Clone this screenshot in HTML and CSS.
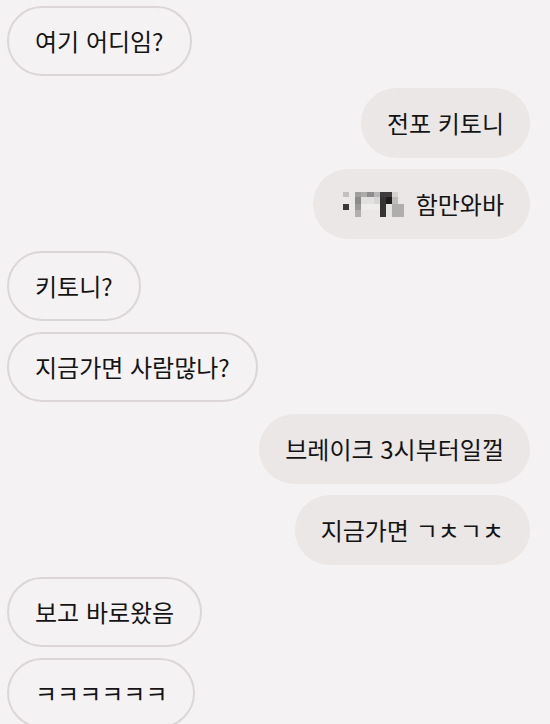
FILE: index.html
```html
<!DOCTYPE html>
<html lang="ko">
<head>
<meta charset="utf-8">
<link rel="stylesheet" href="styles.css">
</head>
<body>
<div class="chat">
  <div class="row in"><div class="bubble">여기 어디임?</div></div>
  <div class="row out"><div class="bubble">전포 키토니</div></div>
  <div class="row out"><div class="bubble"><svg class="mosaic" width="62" height="25" viewBox="0 0 62 25">
    <rect x="1" y="0" width="6" height="5" fill="#c4c0c1"/>
    <rect x="1" y="5" width="6" height="7" fill="#ece9e9"/>
    <rect x="1" y="12" width="6" height="6" fill="#3a3838"/>
    <rect x="13" y="0" width="6" height="5" fill="#a09d9e"/>
    <rect x="13" y="5" width="6" height="7" fill="#8d8a8b"/>
    <rect x="13" y="12" width="6" height="6" fill="#9c999a"/>
    <rect x="13" y="18" width="6" height="7" fill="#b2afb0"/>
    <rect x="19" y="0" width="6" height="5" fill="#aeabac"/>
    <rect x="19" y="5" width="13" height="7" fill="#e3e0e0"/>
    <rect x="25" y="0" width="7" height="5" fill="#8f8c8d"/>
    <rect x="32" y="0" width="6" height="5" fill="#b9b6b7"/>
    <rect x="32" y="5" width="6" height="7" fill="#d8d5d5"/>
    <rect x="19" y="12" width="19" height="6" fill="#efecec"/>
    <rect x="38" y="0" width="12" height="5" fill="#3d3b3b"/>
    <rect x="38" y="5" width="6" height="20" fill="#353333"/>
    <rect x="44" y="5" width="6" height="7" fill="#1e1c1c"/>
    <rect x="44" y="12" width="6" height="13" fill="#e6e3e3"/>
    <rect x="50" y="0" width="6" height="5" fill="#d6d3d3"/>
    <rect x="50" y="5" width="6" height="7" fill="#bdbaba"/>
    <rect x="50" y="12" width="12" height="13" fill="#b0adad"/>
  </svg><span class="txt">함만와바</span></div></div>
  <div class="row in"><div class="bubble">키토니?</div></div>
  <div class="row in"><div class="bubble">지금가면 사람많나?</div></div>
  <div class="row out"><div class="bubble">브레이크 3시부터일껄</div></div>
  <div class="row out"><div class="bubble">지금가면 ㄱㅊㄱㅊ</div></div>
  <div class="row in"><div class="bubble">보고 바로왔음</div></div>
  <div class="row in"><div class="bubble">ㅋㅋㅋㅋㅋㅋ</div></div>
</div>
</body>
</html>
```
FILE: styles.css
```css
html, body {
  margin: 0;
  padding: 0;
  background: #f5f2f3;
}
body {
  width: 550px;
  height: 724px;
  overflow: hidden;
  font-family: "Noto Sans CJK KR", "Noto Sans", sans-serif;
  color: #151414;
}
.chat {
  display: flex;
  flex-direction: column;
  gap: 11.5px;
  padding: 6px 20px 0 7px;
}
.row {
  display: flex;
}
.row.in { justify-content: flex-start; }
.row.out { justify-content: flex-end; }
.bubble {
  box-sizing: border-box;
  height: 70px;
  border-radius: 35px;
  padding: 0 26px;
  display: flex;
  align-items: center;
  font-size: 24px;
  line-height: 1;
  white-space: nowrap;
}
.in .bubble {
  border: 2px solid #dcd6d7;
  background: #f5f2f3;
}
.out .bubble {
  background: #ebe7e7;
}
.mosaic {
  display: block;
  margin: 0 12px 0 3px;
}
```
